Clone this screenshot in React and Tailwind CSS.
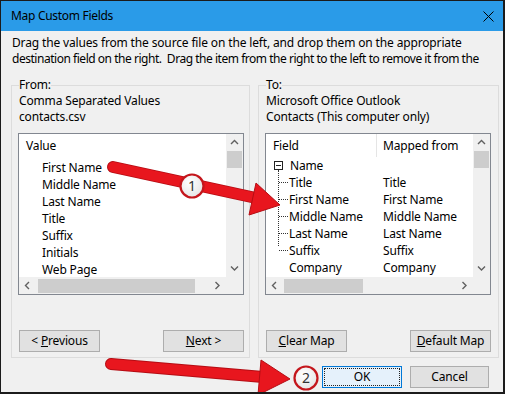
import React from "react";

const font = { fontFamily: '"Noto Sans", "Open Sans", sans-serif' };

function Chevron({ dir }) {
  const paths = {
    up: "M1 5 L4.5 1.5 L8 5",
    down: "M1 1.5 L4.5 5 L8 1.5",
    left: "M5 1 L1.5 4.5 L5 8",
    right: "M1.5 1 L5 4.5 L1.5 8",
  };
  const vertical = dir === "up" || dir === "down";
  return (
    <svg width={vertical ? 9 : 7} height={vertical ? 7 : 9} viewBox={vertical ? "0 0 9 7" : "0 0 7 9"}>
      <path d={paths[dir]} fill="none" stroke="#606060" strokeWidth="1.4" />
    </svg>
  );
}

function VScroll() {
  return (
    <div className="flex h-full w-[17px] flex-col bg-[#f0f0f0]">
      <div className="flex h-[17px] items-center justify-center"><Chevron dir="up" /></div>
      <div className="mx-auto h-[17px] w-[15px] bg-[#cdcdcd]" />
      <div className="flex-1" />
      <div className="flex h-[17px] items-center justify-center"><Chevron dir="down" /></div>
    </div>
  );
}

function HScroll({ thumbLeft, thumbWidth }) {
  return (
    <div className="flex h-[17px] w-full items-center bg-[#f0f0f0]">
      <div className="flex h-[17px] w-[17px] items-center justify-center"><Chevron dir="left" /></div>
      <div className="h-[17px] flex-1">
        <div className="flex h-full items-center">
          <div style={{ marginLeft: thumbLeft, width: thumbWidth }} className="h-[14px] bg-[#cdcdcd]" />
        </div>
      </div>
      <div className="flex h-[17px] w-[17px] items-center justify-center"><Chevron dir="right" /></div>
    </div>
  );
}

function Button({ children, className = "" }) {
  return (
    <div className={"flex h-[22px] items-center justify-center border border-[#adadad] bg-[#e1e1e1] text-[12px] leading-none text-[#000] " + className}>
      {children}
    </div>
  );
}

function LeftList() {
  const items = ["First Name", "Middle Name", "Last Name", "Title", "Suffix", "Initials", "Web Page"];
  return (
    <div className="-ml-px grid h-[162px] w-[226px] grid-cols-[1fr_17px] grid-rows-[143px_17px] border border-[#828790] bg-white">
      <div className="overflow-hidden">
        <div className="h-[25px] pl-[7px] pt-[4px] text-[12px] leading-[16px]">Value</div>
        {items.map((t) => (
          <div key={t} className="h-[17px] pl-[23px] text-[12px] leading-[17px]">{t}</div>
        ))}
      </div>
      <VScroll />
      <HScroll thumbLeft={2} thumbWidth={157} />
      <div className="bg-[#f0f0f0]" />
    </div>
  );
}

function RightList() {
  const rows = [
    ["Title", "Title"],
    ["First Name", "First Name"],
    ["Middle Name", "Middle Name"],
    ["Last Name", "Last Name"],
    ["Suffix", "Suffix"],
  ];
  return (
    <div className="-ml-px grid h-[162px] w-[226px] grid-cols-[1fr_17px] grid-rows-[143px_17px] border border-[#828790] bg-white">
      <div className="overflow-hidden text-[12px]">
        <div className="flex h-[23px]">
          <div className="w-[111px] border-r border-[#e5e5e5] pl-[7px] pt-[4px] leading-[16px]">Field</div>
          <div className="pl-[6px] pt-[4px] leading-[16px]">Mapped from</div>
        </div>
        <div className="relative">
          <div className="flex h-[17px] items-center">
            <div className="ml-[8px] flex h-[9px] w-[9px] items-center justify-center border border-[#222]">
              <div className="h-px w-[5px] bg-[#222]" />
            </div>
            <span className="ml-[7px] leading-[17px]">Name</span>
          </div>
          <div className="absolute left-[12px] top-[13px] h-[76px] border-l border-dotted border-[#333]" />
          {rows.map(([a, b]) => (
            <div key={a} className="flex h-[17px] leading-[17px]">
              <div className="flex w-[111px] items-center">
                <div className="ml-[13px] w-[9px] border-t border-dotted border-[#333]" />
                <span className="ml-px">{a}</span>
              </div>
              <div className="pl-[6px]">{b}</div>
            </div>
          ))}
          <div className="flex h-[17px] leading-[17px]">
            <div className="w-[111px] pl-[23px]">Company</div>
            <div className="pl-[6px]">Company</div>
          </div>
        </div>
      </div>
      <VScroll />
      <HScroll thumbLeft={1} thumbWidth={79} />
      <div className="bg-[#f0f0f0]" />
    </div>
  );
}

function Badge({ cx, cy, n }) {
  return (
    <g>
      <circle cx={cx} cy={cy} r="11.5" fill="url(#badgeFill)" stroke="#c4161c" strokeWidth="2.2" />
      <text x={cx} y={cy + 5} textAnchor="middle" fontSize="14" fontFamily="Noto Sans, sans-serif" fill="#333">{n}</text>
    </g>
  );
}

function Arrows() {
  return (
    <svg className="pointer-events-none absolute left-0 top-0" width="505" height="394" viewBox="0 0 505 394">
      <defs>
        <radialGradient id="badgeFill" cx="0.4" cy="0.35" r="0.7">
          <stop offset="0" stopColor="#ffffff" />
          <stop offset="1" stopColor="#e4e4e4" />
        </radialGradient>
      </defs>
      <line x1="112" y1="166" x2="255" y2="197" stroke="#b50d14" strokeWidth="12" strokeLinecap="round" />
      <line x1="112" y1="166" x2="255" y2="197" stroke="#e8161e" strokeWidth="10" strokeLinecap="round" />
      <polygon points="279,204 255,182 248,214" fill="#e8161e" stroke="#b50d14" strokeWidth="1" strokeLinejoin="round" />
      <Badge cx={191} cy={185} n="1" />
      <line x1="110" y1="363" x2="262" y2="376" stroke="#b50d14" strokeWidth="12" strokeLinecap="round" />
      <line x1="110" y1="363" x2="262" y2="376" stroke="#e8161e" strokeWidth="10" strokeLinecap="round" />
      <polygon points="289,378 260,359 257,394" fill="#e8161e" stroke="#b50d14" strokeWidth="1" strokeLinejoin="round" />
      <Badge cx={305} cy={377} n="2" />
    </svg>
  );
}

export default function App() {
  return (
    <div style={font} className="relative flex h-[394px] w-[505px] flex-col overflow-hidden border border-b-2 border-r-2 border-[#1b1b1b] bg-[#f0f0f0] tracking-[-0.15px] text-[#000]">
      <div className="flex h-[30px] shrink-0 items-center justify-between bg-[#2a9be8] pl-[10px] pr-[9px]">
        <span className="text-[12px] leading-none tracking-[-0.3px] text-[#000]">Map Custom Fields</span>
        <svg width="11" height="11" viewBox="0 0 11 11">
          <path d="M0.5 0.5 L10.5 10.5 M10.5 0.5 L0.5 10.5" stroke="#000" strokeWidth="1" />
        </svg>
      </div>
      <div className="whitespace-nowrap pl-[11px] pt-[4px] text-[12px] leading-[16px]">
        <div>Drag the values from the source file on the left, and drop them on the appropriate</div>
        <div className="tracking-[-0.47px]">destination field on the right.&nbsp; Drag the item from the right to the left to remove it from the</div>
      </div>
      <div className="mt-[10px] flex gap-[8px] pl-[10px]">
        <fieldset className="w-[239px] border border-[#dcdcdc] pb-[5px] pl-[7px] pr-[5px]">
          <legend className="text-[12px] leading-[16px]">From:</legend>
          <div className="text-[12px] leading-[16px]">
            <div>Comma Separated Values</div>
            <div>contacts.csv</div>
          </div>
          <div className="mt-[8px]">
            <LeftList />
          </div>
          <div className="mt-[35px] flex justify-between">
            <Button className="w-[81px]"><span>&lt; <span className="underline">P</span>revious</span></Button>
            <Button className="w-[81px]"><span><span className="underline">N</span>ext &gt;</span></Button>
          </div>
        </fieldset>
        <fieldset className="w-[240px] border border-[#dcdcdc] pb-[5px] pl-[7px] pr-[7px]">
          <legend className="text-[12px] leading-[16px]">To:</legend>
          <div className="text-[12px] leading-[16px]">
            <div>Microsoft Office Outlook</div>
            <div>Contacts (This computer only)</div>
          </div>
          <div className="mt-[8px]">
            <RightList />
          </div>
          <div className="mt-[35px] flex justify-between">
            <Button className="w-[81px]"><span><span className="underline">C</span>lear Map</span></Button>
            <Button className="w-[81px]"><span><span className="underline">D</span>efault Map</span></Button>
          </div>
        </fieldset>
      </div>
      <div className="mt-[8px] flex justify-end gap-[8px] pr-[14px]">
        <div className="flex h-[22px] w-[80px] items-center justify-center border border-[#0078d7] bg-[#e5f1fb] p-px">
          <div className="flex h-full w-full items-center justify-center border border-dotted border-[#222] text-[12px] leading-none">OK</div>
        </div>
        <Button className="w-[79px]">Cancel</Button>
      </div>
      <Arrows />
    </div>
  );
}
